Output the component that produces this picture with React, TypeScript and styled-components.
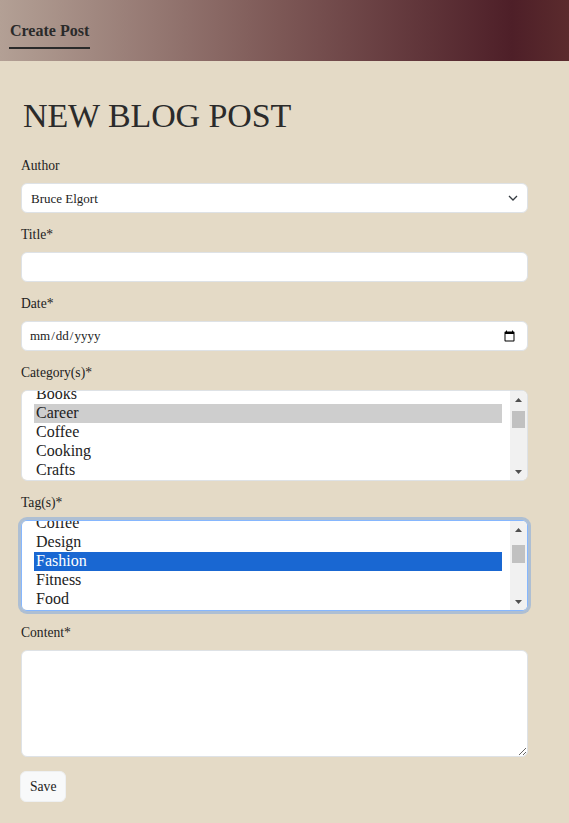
import React, { useEffect, useRef } from 'react'
import styled, { createGlobalStyle, css } from 'styled-components'

const GlobalStyle = createGlobalStyle`
  html, body {
    margin: 0;
    padding: 0;
    background: #e4dac6;
  }
  body {
    font-family: "Liberation Serif", "Times New Roman", serif;
    color: #222;
  }
`

const Header = styled.header`
  height: 61px;
  background: linear-gradient(90deg, #b3a095 0%, #7d5856 49%, #4e1f28 90%, #5b2b2d 100%);
`

const NavLink = styled.a`
  display: inline-block;
  margin: 22px 0 0 9px;
  padding: 0 1px 7px 1px;
  font-size: 16px;
  line-height: 18px;
  font-weight: 700;
  color: #2a2a2a;
  text-decoration: none;
  border-bottom: 2px solid #2a2a2a;
`

const Main = styled.main`
  padding: 35px 41px 22px 21px;
`

const Heading = styled.h1`
  margin: 0 0 22px 2px;
  font-size: 34px;
  line-height: 40px;
  font-weight: 400;
  letter-spacing: -0.1px;
  color: #2b2b2b;
`

const Form = styled.form`
  display: flex;
  flex-direction: column;
`

const Field = styled.div`
  display: flex;
  flex-direction: column;
  margin-bottom: 14px;
`

const Label = styled.label`
  display: block;
  font-size: 13.6px;
  line-height: 16px;
  margin-bottom: 9px;
  color: #222;
`

const controlBase = css`
  box-sizing: border-box;
  width: 100%;
  border: 1px solid #dee2e6;
  border-radius: 6px;
  background-color: #fff;
  font-family: "Liberation Serif", "Times New Roman", serif;
  color: #222;
  outline: none;
`

const SelectWrap = styled.div`
  position: relative;
`

const Select = styled.select`
  ${controlBase};
  appearance: none;
  height: 30px;
  padding: 0 30px 0 9px;
  font-size: 13px;
`

const Chevron = styled.svg`
  position: absolute;
  right: 10px;
  top: 12px;
  width: 10px;
  height: 6px;
  pointer-events: none;
`

const Input = styled.input`
  ${controlBase};
  height: 30px;
  padding: 0 9px 0 7px;
  font-size: 13px;
`

const ListWrap = styled.div`
  position: relative;
`

const ListBox = styled.select<{ $focused?: boolean }>`
  ${controlBase};
  display: block;
  height: 91px;
  padding: 4px 25px 4px 12px;
  font-size: 16px;
  overflow-y: scroll;
  scrollbar-width: none;

  option {
    padding: 0 2px 1px;
    line-height: 18px;
    min-height: 0;
    color: #222;
  }
  option:checked {
    background: linear-gradient(#cecece, #cecece);
    background-color: #cecece;
    color: #222;
  }

  ${({ $focused }) =>
    $focused &&
    css`
      border-color: #86b7fe;
      box-shadow: 0 0 0 3px rgba(13, 110, 253, 0.25);
      option:checked {
        background: linear-gradient(#1967d2, #1967d2);
        background-color: #1967d2;
        color: #fff;
      }
    `}
`

const ScrollTrack = styled.div`
  position: absolute;
  top: 1px;
  right: 1px;
  bottom: 1px;
  width: 17px;
  display: flex;
  flex-direction: column;
  background: #f1f1f1;
  border-radius: 0 5px 5px 0;
  pointer-events: none;
`

const ScrollButton = styled.div`
  height: 17px;
  flex: none;
  display: flex;
  align-items: center;
  justify-content: center;
`

const ScrollSpace = styled.div`
  flex: 1;
`

const Thumb = styled.div<{ $offset: number; $size: number }>`
  margin: ${({ $offset }) => $offset}px 2px 0;
  height: ${({ $size }) => $size}px;
  background: #c1c1c1;
`

const Arrow = ({ down }: { down?: boolean }) => (
  <svg width="7" height="4" viewBox="0 0 7 4">
    <polygon points={down ? '0,0 7,0 3.5,4' : '0,4 7,4 3.5,0'} fill="#505050" />
  </svg>
)

const FakeScrollbar = ({ offset, size }: { offset: number; size: number }) => (
  <ScrollTrack aria-hidden>
    <ScrollButton>
      <Arrow />
    </ScrollButton>
    <Thumb $offset={offset} $size={size} />
    <ScrollSpace />
    <ScrollButton>
      <Arrow down />
    </ScrollButton>
  </ScrollTrack>
)

const TextArea = styled.textarea`
  ${controlBase};
  height: 107px;
  padding: 6px 9px;
  font-size: 13px;
  resize: vertical;
  display: block;
`

const SaveButton = styled.button`
  align-self: flex-start;
  margin-left: -1px;
  height: 31px;
  padding: 0 9px;
  border: 1px solid #eef0f2;
  border-radius: 6px;
  background: #f8f9fa;
  font-family: "Liberation Serif", "Times New Roman", serif;
  font-size: 13.6px;
  color: #222;
`

const categories = [
  'Art', 'Beauty', 'Books', 'Career', 'Coffee', 'Cooking', 'Crafts', 'Design',
  'DIY', 'Education', 'Entertainment', 'Fashion', 'Finance', 'Fitness', 'Food',
  'Gaming', 'Gardening', 'Health',
]

const tags = [
  'Art', 'Books', 'Career', 'Coffee', 'Design', 'Fashion', 'Fitness', 'Food',
  'Gaming', 'Health', 'Lifestyle', 'Music', 'Nature', 'Photography', 'Science',
  'Sports', 'Technology', 'Travel',
]

export default function App() {
  const catRef = useRef<HTMLSelectElement>(null)
  const tagRef = useRef<HTMLSelectElement>(null)

  useEffect(() => {
    if (catRef.current) catRef.current.scrollTop = 48
    if (tagRef.current) tagRef.current.scrollTop = 68
  }, [])

  return (
    <>
      <GlobalStyle />
      <Header>
        <NavLink href="#">Create Post</NavLink>
      </Header>
      <Main>
        <Heading>NEW BLOG POST</Heading>
        <Form onSubmit={(e) => e.preventDefault()}>
          <Field>
            <Label htmlFor="author">Author</Label>
            <SelectWrap>
              <Select id="author" defaultValue="Bruce Elgort">
                <option>Bruce Elgort</option>
              </Select>
              <Chevron viewBox="0 0 10 6">
                <path d="M1 1l4 4 4-4" fill="none" stroke="#343a40" strokeWidth="1.3" />
              </Chevron>
            </SelectWrap>
          </Field>
          <Field>
            <Label htmlFor="title">Title*</Label>
            <Input id="title" type="text" />
          </Field>
          <Field>
            <Label htmlFor="date">Date*</Label>
            <Input id="date" type="date" />
          </Field>
          <Field>
            <Label htmlFor="categories">Category(s)*</Label>
            <ListWrap>
              <ListBox id="categories" ref={catRef} multiple defaultValue={['Career']}>
                {categories.map((c) => (
                  <option key={c} value={c}>{c}</option>
                ))}
              </ListBox>
              <FakeScrollbar offset={3} size={17} />
            </ListWrap>
          </Field>
          <Field>
            <Label htmlFor="tags">Tag(s)*</Label>
            <ListWrap>
              <ListBox id="tags" ref={tagRef} multiple $focused defaultValue={['Fashion']}>
                {tags.map((t) => (
                  <option key={t} value={t}>{t}</option>
                ))}
              </ListBox>
              <FakeScrollbar offset={7} size={18} />
            </ListWrap>
          </Field>
          <Field>
            <Label htmlFor="content">Content*</Label>
            <TextArea id="content" />
          </Field>
          <SaveButton type="submit">Save</SaveButton>
        </Form>
      </Main>
    </>
  )
}
